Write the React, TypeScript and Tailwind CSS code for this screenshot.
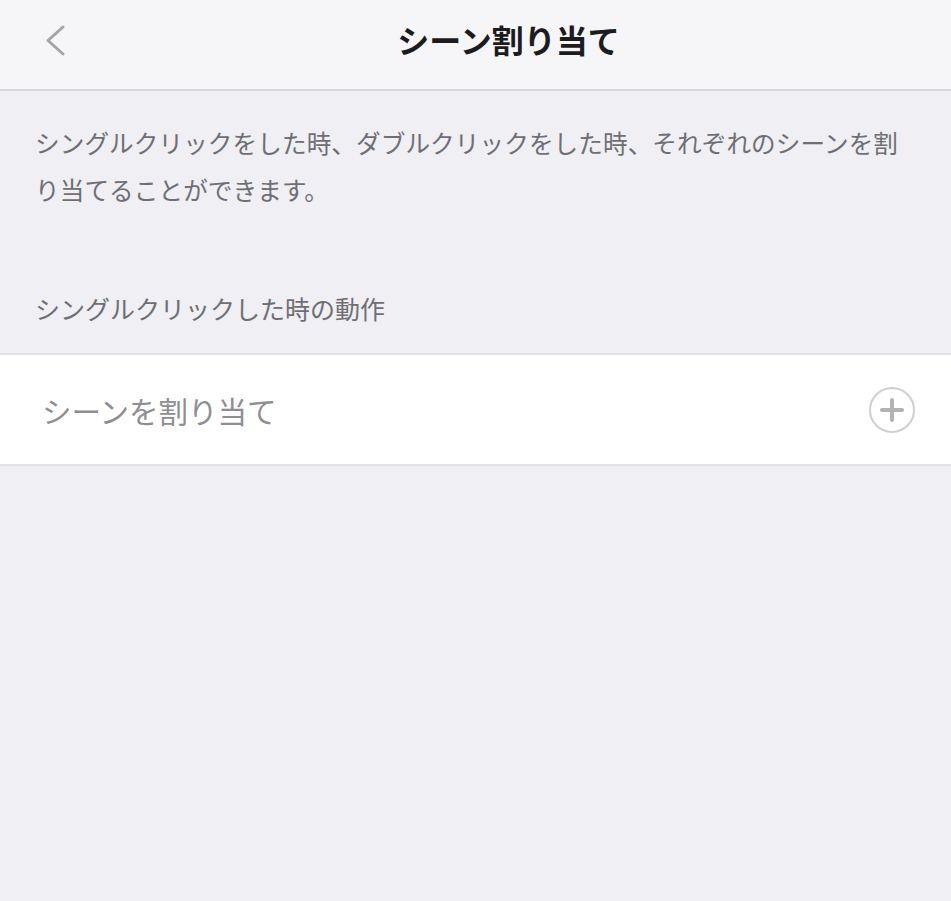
export default function App() {
  return (
    <div
      className="min-h-[901px] w-full bg-[#efeff4]"
      style={{ fontFamily: '"Noto Sans CJK JP", "Noto Sans", sans-serif' }}
    >
      <header className="relative flex h-[91px] items-center border-b-2 border-[#d9d9dd] bg-[#f6f6f8]">
        <button type="button" aria-label="戻る" className="absolute left-[38px] top-[22px] grid size-9 place-items-center">
          <svg width="24" height="34" viewBox="0 0 24 34" fill="none">
            <path d="M19 4 L4 17.5 L19 31" stroke="#a3a3a8" strokeWidth="3" strokeLinecap="round" strokeLinejoin="round" />
          </svg>
        </button>
        <h1 className="-mt-[12px] w-full pl-[66px] text-center text-[32px] font-bold leading-[40px] text-[#1c1c1e]">
          シーン割り当て
        </h1>
      </header>

      <p className="pl-[35px] pr-4 pt-[28px] text-[24.6px] leading-[47px] tracking-[0.1px] text-[#6e6e73]">
        シングルクリックをした時、ダブルクリックをした時、それぞれのシーンを割
        <br />
        り当てることができます。
      </p>

      <p className="mt-[80px] pl-[35px] text-[25px] leading-[30px] text-[#6e6e73]">
        シングルクリックした時の動作
      </p>

      <div className="mt-[30px] flex h-[113px] items-center justify-between border-y-2 border-[#e2e2e6] bg-white pl-[42px] pr-[35px]">
        <span className="text-[29.5px] leading-[36px] text-[#8e8e93]">シーンを割り当て</span>
        <svg width="48" height="48" viewBox="0 0 48 48" fill="none">
          <circle cx="24" cy="24" r="22" stroke="#cfcfd3" strokeWidth="2" />
          <path d="M24 14 V34 M14 24 H34" stroke="#b3b3b7" strokeWidth="4" strokeLinecap="round" />
        </svg>
      </div>
    </div>
  );
}
